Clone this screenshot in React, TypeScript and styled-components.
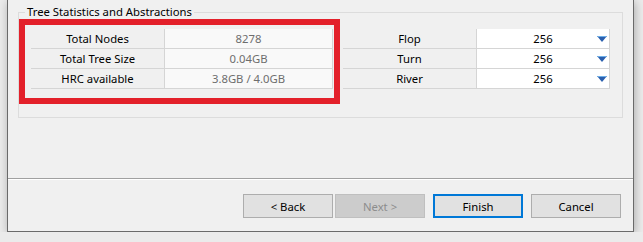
import styled, { createGlobalStyle } from "styled-components";

const GlobalStyle = createGlobalStyle`
  html, body {
    margin: 0;
    padding: 0;
    background: #ebebeb;
    font-family: "Noto Sans", "Liberation Sans", sans-serif;
    font-size: 11.3px;
    color: #000;
    overflow: hidden;
  }
`;

const stats = [
  { label: "Total Nodes", value: "8278" },
  { label: "Total Tree Size", value: "0.04GB" },
  { label: "HRC available", value: "3.8GB / 4.0GB" },
];

const abstractions = [
  { label: "Flop", value: "256" },
  { label: "Turn", value: "256" },
  { label: "River", value: "256" },
];

function DropArrow() {
  return (
    <svg width="10" height="6" viewBox="0 0 10 6">
      <polygon points="0,0 10,0 5,6" fill="#2a5fae" />
      <line x1="0.5" y1="0.5" x2="9.5" y2="0.5" stroke="#6fb0e8" strokeWidth="1" />
    </svg>
  );
}

function App() {
  return (
    <>
      <GlobalStyle />
      <Window>
        <Body>
          <Group>
            <Legend>Tree Statistics and Abstractions</Legend>
            <GroupRow>
              <Highlight>
                <Grid $cols="134px 168px">
                  {stats.map((s) => (
                    <Row key={s.label}>
                      <LabelCell>{s.label}</LabelCell>
                      <ReadCell>{s.value}</ReadCell>
                    </Row>
                  ))}
                </Grid>
              </Highlight>
              <RightGrid $cols="134px 133px">
                {abstractions.map((a) => (
                  <Row key={a.label}>
                    <LabelCell>{a.label}</LabelCell>
                    <ComboCell>
                      <span />
                      <span>{a.value}</span>
                      <ArrowSlot>
                        <DropArrow />
                      </ArrowSlot>
                    </ComboCell>
                  </Row>
                ))}
              </RightGrid>
            </GroupRow>
          </Group>
        </Body>
        <Separator />
        <Footer>
          <Button>&lt; Back</Button>
          <Button disabled>Next &gt;</Button>
          <Button $default>Finish</Button>
          <Button>Cancel</Button>
        </Footer>
      </Window>
    </>
  );
}

const Window = styled.div`
  margin-left: 7px;
  width: 627px;
  height: 232px;
  box-sizing: border-box;
  background: #f0f0f0;
  border: 1px solid #6a6a6a;
  border-top: none;
  box-shadow: 1px 2px 9px rgba(0, 0, 0, 0.28);
  display: flex;
  flex-direction: column;
`;

const Body = styled.div`
  height: 178px;
  padding: 5px 10px 0 10px;
  box-sizing: border-box;
`;

const Group = styled.fieldset`
  margin: 0;
  padding: 0 12px 13px 0;
  border: 1px solid #dcdcdc;
  min-width: 0;
`;

const Legend = styled.legend`
  margin-left: 6px;
  padding: 0 2px;
  line-height: 14px;
  color: #000;
`;

const GroupRow = styled.div`
  display: flex;
  align-items: flex-start;
  gap: 3px;
`;

const Highlight = styled.div`
  border: 6px solid #e3202a;
  padding: 4px 1px 9px 6px;
`;

const Grid = styled.div<{ $cols: string }>`
  display: grid;
  grid-template-columns: ${(p) => p.$cols};
  grid-auto-rows: 20px;
`;

const RightGrid = styled(Grid)`
  margin-top: 10px;
`;

const Row = styled.div`
  display: contents;
`;

const Cell = styled.div`
  box-sizing: border-box;
  border-right: 1px solid #d5d5d5;
  border-bottom: 1px solid #d5d5d5;
  line-height: 19px;
  text-align: center;
  white-space: nowrap;
`;

const LabelCell = styled(Cell)`
  background: #f0f0f0;
  color: #000;
`;

const ReadCell = styled(Cell)`
  background: #f9f9f9;
  color: #6d6d6d;
`;

const ComboCell = styled(Cell)`
  background: #fff;
  display: grid;
  grid-template-columns: 1fr auto 1fr;
  align-items: center;
`;

const ArrowSlot = styled.span`
  display: flex;
  justify-content: flex-end;
  padding-right: 2px;
`;

const Separator = styled.div`
  border-top: 1px solid #a0a0a0;
  border-bottom: 1px solid #ffffff;
`;

const Footer = styled.div`
  display: flex;
  justify-content: flex-end;
  padding: 14px 12px 0 0;
`;

const Button = styled.button<{ $default?: boolean }>`
  width: 90px;
  height: 24px;
  margin-left: 8px;
  box-sizing: border-box;
  font-family: "Noto Sans", "Liberation Sans", sans-serif;
  font-size: 11.3px;
  color: #000;
  background: #e1e1e1;
  border: ${(p) => (p.$default ? "2px solid #0078d7" : "1px solid #adadad")};
  padding: 0;

  &:first-child {
    margin-left: 0;
  }

  &:disabled {
    background: #cccccc;
    border-color: #bfbfbf;
    color: #8c8c8c;
    margin-left: 2px;
  }
`;

export default App;
